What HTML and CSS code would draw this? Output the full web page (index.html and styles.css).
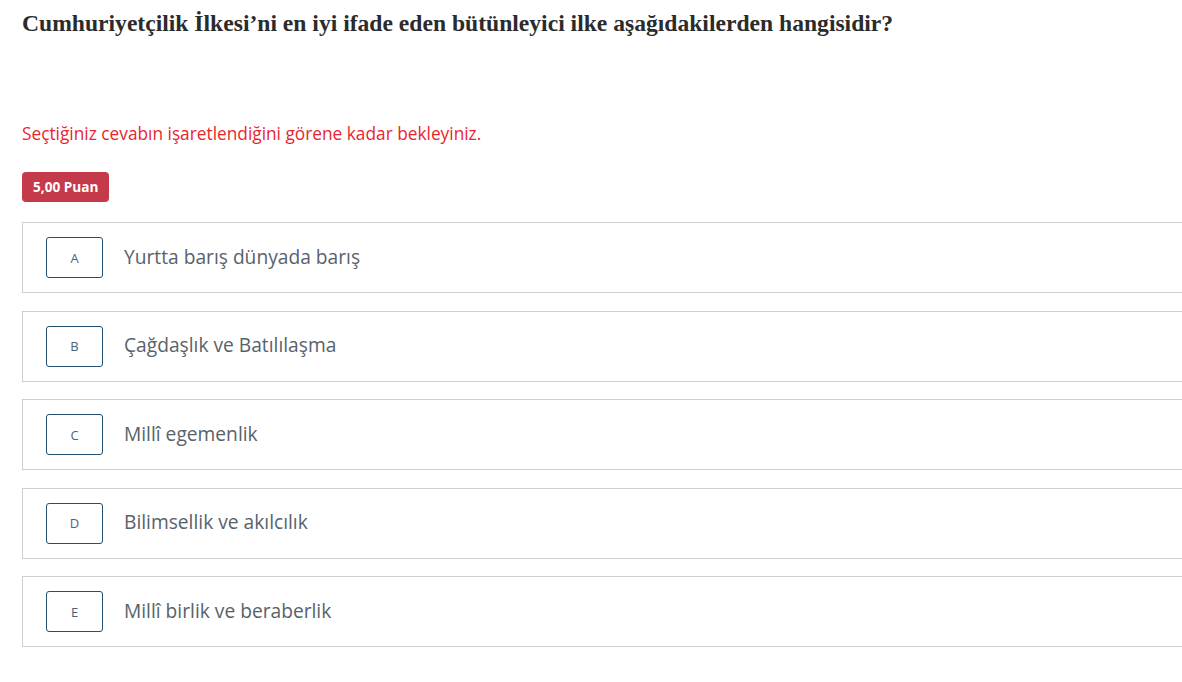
FILE: index.html
```html
<!DOCTYPE html>
<html lang="tr">
<head>
<meta charset="utf-8">
<title>Soru</title>
<link rel="stylesheet" href="styles.css">
</head>
<body>
<div class="page">
  <h1 class="question">Cumhuriyetçilik İlkesi’ni en iyi ifade eden bütünleyici ilke aşağıdakilerden hangisidir?</h1>
  <p class="warning">Seçtiğiniz cevabın işaretlendiğini görene kadar bekleyiniz.</p>
  <span class="badge">5,00 Puan</span>
  <ul class="options">
    <li class="option"><span class="letter">A</span><span class="text">Yurtta barış dünyada barış</span></li>
    <li class="option"><span class="letter">B</span><span class="text">Çağdaşlık ve Batılılaşma</span></li>
    <li class="option"><span class="letter">C</span><span class="text">Millî egemenlik</span></li>
    <li class="option"><span class="letter">D</span><span class="text">Bilimsellik ve akılcılık</span></li>
    <li class="option"><span class="letter">E</span><span class="text">Millî birlik ve beraberlik</span></li>
  </ul>
</div>
</body>
</html>
```

FILE: styles.css
```css
html, body {
  margin: 0;
  padding: 0;
  background: #fff;
  overflow: hidden;
}
.page {
  padding: 8px 0 0 22px;
  font-family: "Open Sans", "Noto Sans", sans-serif;
}
.question {
  margin: 0;
  font-family: "Liberation Serif", "Times New Roman", serif;
  font-weight: bold;
  font-size: 23.6px;
  line-height: 30px;
  color: #2b2b2b;
}
.warning {
  margin: 84px 0 0;
  font-size: 17.3px;
  line-height: 24px;
  color: #e8262d;
}
.badge {
  display: inline-block;
  margin-top: 26px;
  padding: 0 11px;
  height: 30px;
  line-height: 30px;
  border-radius: 4px;
  background: #c43a4b;
  color: #fff;
  font-weight: bold;
  font-size: 13.6px;
}
.options {
  list-style: none;
  margin: 20px -40px 0 0;
  padding: 0;
  display: flex;
  flex-direction: column;
  gap: 17.5px;
}
.option {
  display: flex;
  align-items: center;
  height: 69px;
  border: 1px solid #cfcfcf;
  padding-left: 23px;
}
.letter {
  width: 55px;
  height: 39px;
  border: 1px solid #244f6e;
  border-radius: 3px;
  display: flex;
  align-items: center;
  justify-content: center;
  font-size: 13px;
  color: #4a6478;
}
.text {
  margin-left: 21px;
  padding-bottom: 3px;
  font-size: 19.2px;
  color: #58626b;
}
```
